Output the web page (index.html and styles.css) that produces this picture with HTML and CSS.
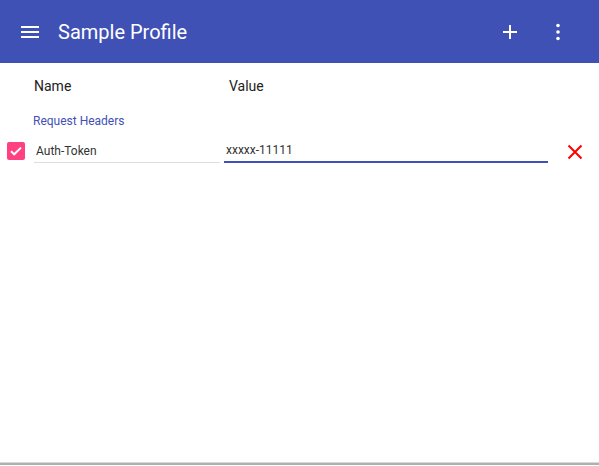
FILE: index.html
```html
<!DOCTYPE html>
<html>
<head>
<meta charset="utf-8">
<link rel="stylesheet" href="styles.css">
</head>
<body>
<div class="app">
  <header class="toolbar">
    <svg class="menu" width="24" height="24" viewBox="0 0 24 24"><path d="M3 6h18v2H3zM3 11h18v2H3zM3 16h18v2H3z" fill="#fff"/></svg>
    <div class="title">Sample Profile</div>
    <svg class="plus" width="24" height="24" viewBox="0 0 24 24"><path d="M19 13h-6v6h-2v-6H5v-2h6V5h2v6h6v2z" fill="#fff"/></svg>
    <svg class="more" width="24" height="24" viewBox="0 0 24 24"><circle cx="12" cy="5.5" r="1.8" fill="#fff"/><circle cx="12" cy="12" r="1.8" fill="#fff"/><circle cx="12" cy="18.5" r="1.8" fill="#fff"/></svg>
  </header>
  <main class="content">
    <div class="cols">
      <div class="col-name">Name</div>
      <div class="col-value">Value</div>
    </div>
    <div class="section">Request Headers</div>
    <div class="row">
      <div class="check">
        <svg width="18" height="18" viewBox="0 0 18 18"><path d="M4 9.2l3.2 3.1L14 5.6" stroke="#fff" stroke-width="1.9" fill="none"/></svg>
      </div>
      <div class="field name">Auth-Token</div>
      <div class="field value">xxxxx-11111</div>
      <svg class="del" width="16" height="16" viewBox="0 0 16 16"><path d="M1.5 1.5l13 13M14.5 1.5l-13 13" stroke="#f00" stroke-width="2"/></svg>
    </div>
  </main>
  <div class="bottom"></div>
</div>
</body>
</html>
```
FILE: styles.css
```css
html, body { margin: 0; padding: 0; }
body {
  font-family: Roboto, "Liberation Sans", Arial, sans-serif;
  background: #fff;
  width: 599px;
  height: 466px;
  overflow: hidden;
}
.app {
  display: flex;
  flex-direction: column;
  height: 466px;
}
.toolbar {
  height: 63px;
  background: #3f51b5;
  display: flex;
  align-items: center;
  color: #fff;
  flex: none;
}
.menu { margin-left: 18px; }
.title {
  margin-left: 16px;
  font-size: 20px;
  margin-top: 1px;
}
.plus { margin-left: auto; }
.more { margin-left: 24px; margin-right: 29px; }
.content { flex: 1; }
.cols {
  display: flex;
  font-size: 14px;
  color: #222;
  padding-top: 15px;
  height: 17px;
}
.col-name { margin-left: 34px; width: 195px; }
.section {
  margin-top: 19px;
  margin-left: 33px;
  font-size: 12px;
  color: #3f51b5;
}
.row {
  display: flex;
  align-items: flex-start;
  margin-top: 8px;
}
.check {
  margin-left: 7px;
  margin-top: 6px;
  width: 18px;
  height: 18px;
  border-radius: 2px;
  background: #ff4081;
}
.check svg { display: block; }
.field {
  font-size: 12px;
  color: #333;
  height: 22px;
  line-height: 22px;
  padding-top: 4px;
}
.name {
  margin-left: 9px;
  width: 184px;
  padding-left: 2px;
  border-bottom: 1px solid #ddd;
}
.value {
  margin-left: 4px;
  width: 322px;
  padding-left: 2px;
  border-bottom: 2px solid #3f51b5;
  margin-top: -1px;
}
.del { margin-left: 19px; margin-top: 8px; }
.bottom {
  height: 2px;
  background: #b0b0b0;
  border-top: 1px solid #d8d8d8;
  flex: none;
  margin-bottom: 1px;
}
```
